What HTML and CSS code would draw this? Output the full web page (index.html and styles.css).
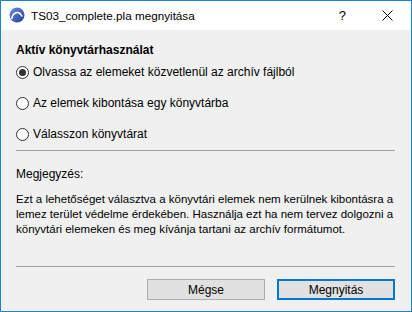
FILE: index.html
```html
<!DOCTYPE html>
<html>
<head>
<meta charset="utf-8">
<link rel="stylesheet" href="styles.css">
</head>
<body>
<div class="window">
  <div class="titlebar">
    <svg class="logo" width="16" height="16" viewBox="0 0 16 16">
      <defs>
        <linearGradient id="g" x1="0" y1="0" x2="1" y2="1">
          <stop offset="0" stop-color="#6f8fe0"/>
          <stop offset="1" stop-color="#1f3f9f"/>
        </linearGradient>
      </defs>
      <circle cx="8" cy="8" r="7.5" fill="url(#g)"/>
      <path d="M2.5 12 C4 5 10 3 13 9.5" fill="none" stroke="#fff" stroke-width="1.6"/>
    </svg>
    <span class="title">TS03_complete.pla megnyitása</span>
    <span class="help">?</span>
    <svg class="close" width="11" height="11" viewBox="0 0 11 11">
      <path d="M0.5 0.5 L10.5 10.5 M10.5 0.5 L0.5 10.5" stroke="#000" stroke-width="1"/>
    </svg>
  </div>
  <div class="content">
    <div class="heading">Aktív könyvtárhasználat</div>
    <div class="options">
      <label class="option"><span class="radio checked"></span>Olvassa az elemeket közvetlenül az archív fájlból</label>
      <label class="option"><span class="radio"></span>Az elemek kibontása egy könyvtárba</label>
      <label class="option"><span class="radio"></span>Válasszon könyvtárat</label>
    </div>
    <hr class="sep sep1">
    <div class="note-label">Megjegyzés:</div>
    <p class="note">Ezt a lehetőséget választva a könyvtári elemek nem kerülnek kibontásra a<br>lemez terület védelme érdekében. Használja ezt ha nem tervez dolgozni a<br>könyvtári elemeken és meg kívánja tartani az archív formátumot.</p>
    <hr class="sep sep2">
    <div class="buttons">
      <button class="btn">Mégse</button>
      <button class="btn default">Megnyitás</button>
    </div>
  </div>
</div>
</body>
</html>
```
FILE: styles.css
```css
* { box-sizing: border-box; }
html, body { margin: 0; padding: 0; }
body {
  width: 412px;
  height: 312px;
  font-family: "Liberation Sans", Arial, sans-serif;
  font-size: 12px;
  color: #000;
  background: #fff;
}
.window {
  width: 412px;
  height: 312px;
  border: 1px solid #1883d7;
  display: flex;
  flex-direction: column;
  background: #f0f0f0;
  overflow: hidden;
}
.titlebar {
  height: 29px;
  background: #fff;
  display: flex;
  align-items: center;
  padding-left: 8px;
  flex: none;
}
.logo { margin-right: 6px; margin-top: -1px; }
.title { flex: 1; font-size: 11.7px; color: #000; }
.help { font-size: 13px; margin-right: 36px; }
.close { margin-right: 18px; }
.content {
  flex: 1;
  padding: 12px 16px 0 15px;
  display: flex;
  flex-direction: column;
}
.heading {
  font-weight: bold;
  line-height: 16px;
}
.options {
  display: flex;
  flex-direction: column;
  gap: 15px;
  margin-top: 6px;
}
.option {
  display: flex;
  align-items: center;
  line-height: 16px;
}
.radio {
  width: 13px;
  height: 13px;
  border: 1px solid #333;
  border-radius: 50%;
  background: #fff;
  margin-right: 4px;
  display: flex;
  align-items: center;
  justify-content: center;
}
.radio.checked::after {
  content: "";
  width: 7px;
  height: 7px;
  border-radius: 50%;
  background: #333;
}
.sep {
  border: none;
  border-top: 1px solid #a0a0a0;
  margin: 0;
}
.sep1 { margin-top: 8px; }
.note-label { margin-top: 15px; line-height: 16px; }
.note {
  margin: 10px 0 0 0;
  line-height: 15px;
  font-size: 11.5px;
  white-space: nowrap;
}
.sep2 { margin-top: 29px; }
.buttons {
  display: flex;
  justify-content: flex-end;
  gap: 12px;
  margin-top: 12px;
}
.btn {
  width: 118px;
  height: 21px;
  font-family: inherit;
  font-size: 12px;
  background: #e1e1e1;
  border: 1px solid #adadad;
  padding: 0;
  color: #000;
}
.btn.default { border: 2px solid #0078d7; }
```
